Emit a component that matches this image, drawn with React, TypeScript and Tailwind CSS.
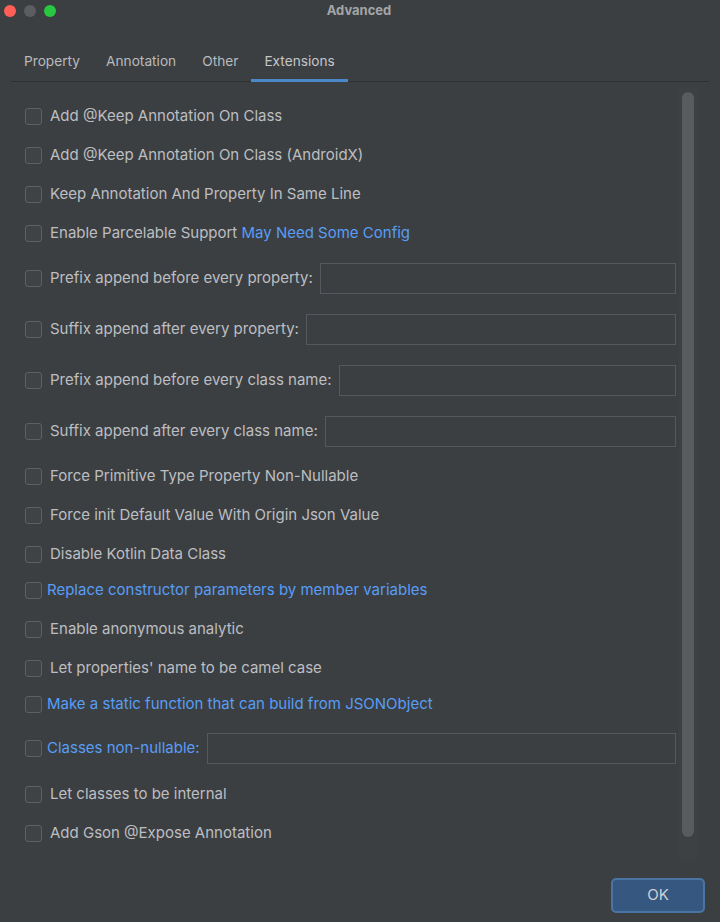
import React from "react";

type Row = {
	label: string;
	link?: string;
	blue?: boolean;
	input?: boolean;
	mt: string;
};

const rows: Row[] = [
	{ label: "Add @Keep Annotation On Class", mt: "mt-0" },
	{ label: "Add @Keep Annotation On Class (AndroidX)", mt: "mt-[22px]" },
	{ label: "Keep Annotation And Property In Same Line", mt: "mt-[22px]" },
	{ label: "Enable Parcelable Support", link: "May Need Some Config", mt: "mt-[22px]" },
	{ label: "Prefix append before every property:", input: true, mt: "mt-[28px]" },
	{ label: "Suffix append after every property:", input: true, mt: "mt-[34px]" },
	{ label: "Prefix append before every class name:", input: true, mt: "mt-[34px]" },
	{ label: "Suffix append after every class name:", input: true, mt: "mt-[34px]" },
	{ label: "Force Primitive Type Property Non-Nullable", mt: "mt-[28px]" },
	{ label: "Force init Default Value With Origin Json Value", mt: "mt-[22px]" },
	{ label: "Disable Kotlin Data Class", mt: "mt-[22px]" },
	{ label: "Replace constructor parameters by member variables", blue: true, mt: "mt-[19px]" },
	{ label: "Enable anonymous analytic", mt: "mt-[22px]" },
	{ label: "Let properties' name to be camel case", mt: "mt-[22px]" },
	{ label: "Make a static function that can build from JSONObject", blue: true, mt: "mt-[19px]" },
	{ label: "Classes non-nullable:", blue: true, input: true, mt: "mt-[27px]" },
	{ label: "Let classes to be internal", mt: "mt-[29px]" },
	{ label: "Add Gson @Expose Annotation", mt: "mt-[22px]" },
];

const tabs = ["Property", "Annotation", "Other", "Extensions"];

const CheckRow = ({ row }: { row: Row }) => (
	<div className={`flex items-center h-[17px] ${row.mt}`}>
		<div className="w-[17px] h-[17px] shrink-0 rounded-[3px] border border-[#5d6065] bg-[#404346]" />
		{row.blue ? (
			<span className="ml-[5px] text-[#589df6] whitespace-nowrap">{row.label}</span>
		) : (
			<span className="ml-[8px] text-[#bcbec2] whitespace-nowrap">
				{row.label}
				{row.link && <span className="text-[#589df6]"> {row.link}</span>}
			</span>
		)}
		{row.input && (
			<div className="ml-[7px] flex-1 h-[31px] border border-[#55585c] bg-[#3c3f41]" />
		)}
	</div>
);

export default function App() {
	return (
		<div className="w-[720px] h-[922px] bg-[#3c3f41] flex flex-col overflow-hidden font-['Inter',sans-serif] text-[15px]">
			{/* title bar */}
			<div className="h-[22px] grid grid-cols-[1fr_auto_1fr] items-center">
				<div className="flex items-center gap-[8px] pl-[4px]">
					<span className="w-[12px] h-[12px] rounded-full bg-[#ff5f57]" />
					<span className="w-[12px] h-[12px] rounded-full bg-[#5b5d60]" />
					<span className="w-[12px] h-[12px] rounded-full bg-[#28c840]" />
				</div>
				<div className="text-[13px] font-bold text-[#a3a5a8] pr-[2px]">Advanced</div>
				<div />
			</div>

			{/* tabs */}
			<div className="mt-[20px] mx-[11px] h-[40px] flex border-b border-[#2f3134]">
				{tabs.map((t) => (
					<div
						key={t}
						className={`px-[13px] pt-[1px] flex items-center text-[13.7px] -mb-px border-b-[3px] ${
							t === "Extensions" ? "border-[#4a88c7] text-[#c4c6ca]" : "border-transparent text-[#b8babe]"
						}`}
					>
						{t}
					</div>
				))}
			</div>

			{/* scroll pane */}
			<div className="mt-[6px] h-[772px] flex">
				<div className="flex-1 pl-[25px] pr-[3px] pt-[20px] flex flex-col">
					{rows.map((r) => (
						<CheckRow key={r.label} row={r} />
					))}
				</div>
				<div className="w-[18px] mr-[23px] bg-[#3e4144] pt-[4px] pl-[3px]">
					<div className="w-[12px] h-[745px] rounded-full bg-[#595b5e]" />
				</div>
			</div>

			{/* footer */}
			<div className="mt-[18px] flex justify-end pr-[15px]">
				<button className="w-[94px] h-[35px] rounded-[5px] border-2 border-[#4a74a4] bg-[#365880] text-[#cdd1d6] text-[15px]">
					OK
				</button>
			</div>
		</div>
	);
}
